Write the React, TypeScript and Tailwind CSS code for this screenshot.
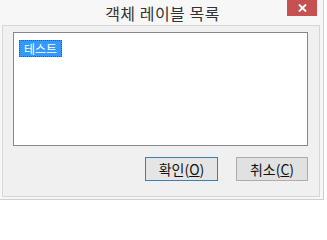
export default function App() {
  return (
    <div className="h-[200px] w-[327px] overflow-hidden bg-white font-['Noto_Sans_CJK_KR',sans-serif]">
      <div className="h-[200px] w-[324px] border-r border-b border-[#cfcfcf] bg-[#f7f7f7]">
        {/* title bar */}
        <div className="relative flex h-[25px] items-center justify-center">
          <span className="pl-[2px] text-[16px] leading-none tracking-[0.5px] text-[#333333]">객체 레이블 목록</span>
          <button className="absolute right-[6px] top-0 flex h-[16px] w-[30px] items-center justify-center bg-[#c75050] text-white">
            <svg width="9" height="8" viewBox="0 0 9 8">
              <path d="M1 0.5 L8 7.5 M8 0.5 L1 7.5" stroke="white" strokeWidth="2" />
            </svg>
          </button>
        </div>

        {/* client area */}
        <div className="ml-[2px] h-[172px] w-[318px] border border-[#d6d6d6] bg-[#f0f0f0] pl-[10px] pt-[6px]">
          <div className="h-[114px] w-[295px] border border-[#828790] bg-white pl-[5px] pt-[2px]">
            <div className="inline-block border border-dotted border-[#1a5fb4] bg-[#3399ff] px-[4px] text-[12px] leading-[15px] text-white">
              테스트
            </div>
          </div>
          <div className="mt-[11px] flex w-[295px] justify-end gap-[18px]">
            <button className="flex h-[24px] w-[73px] items-center justify-center border border-[#3c7fb1] bg-[#e5e5e5] text-[14px] text-[#111111]">
              확인(<span className="underline">O</span>)
            </button>
            <button className="flex h-[24px] w-[72px] items-center justify-center border border-[#acacac] bg-[#e1e1e1] text-[14px] text-[#111111]">
              취소(<span className="underline">C</span>)
            </button>
          </div>
        </div>
      </div>
    </div>
  );
}
